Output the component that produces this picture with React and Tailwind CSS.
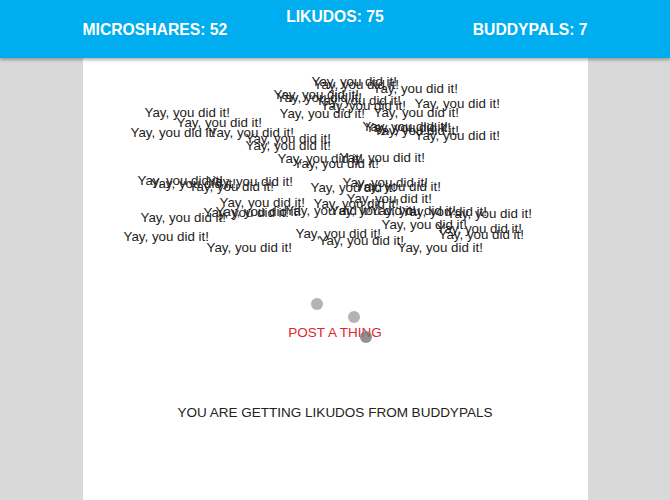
import React from "react";

// [x, y] page coords of each message (left edge, vertical centre)
const yays = [
  [311, 82], [313, 85], [372, 89], [273, 95], [276, 98], [315, 101],
  [414, 104], [320, 106], [144, 113], [279, 114], [373, 113], [176, 123],
  [362, 127], [365, 128], [130, 133], [208, 133], [373, 131], [414, 136],
  [245, 139], [245, 146], [277, 159], [339, 158], [293, 164], [137, 181],
  [150, 184], [207, 182], [342, 183], [188, 187], [310, 188], [355, 187],
  [346, 199], [219, 203], [313, 204], [203, 213], [215, 212], [285, 211],
  [330, 211], [370, 211], [401, 212], [446, 214], [140, 218], [381, 225],
  [436, 229], [295, 234], [438, 235], [123, 237], [318, 241], [206, 248],
  [397, 248],
];

const dots = [
  { left: 228, top: 240, tone: "bg-[#b3b3b3]" },
  { left: 265, top: 253, tone: "bg-[#b3b3b3]" },
  { left: 277, top: 273, tone: "bg-[#777]/80" },
];

export default function App() {
  return (
    <div className="min-h-screen bg-[#d9d9d9] font-['Liberation_Sans',Arial,sans-serif]">
      {/* Score bar */}
      <header className="relative z-10 h-[58px] bg-[#00adee] text-white shadow-[0_2px_3px_rgba(0,0,0,0.3)]">
        <div className="mx-auto grid w-[505px] grid-cols-3 text-[15.7px] font-bold leading-[18px]">
          <div className="pt-[21px]">MICROSHARES: 52</div>
          <div className="pt-[8px] text-center">LIKUDOS: 75</div>
          <div className="pt-[21px] text-right">BUDDYPALS: 7</div>
        </div>
      </header>

      {/* Feed panel */}
      <main className="relative mx-auto h-[442px] w-[505px] bg-white text-[13.33px] leading-[16px] text-[#222]">
        {yays.map(([x, y], i) => (
          <span
            key={i}
            className="absolute whitespace-nowrap"
            style={{ left: x - 82, top: y - 58 - 8 }}
          >
            Yay, you did it!
          </span>
        ))}

        {dots.map((d, i) => (
          <span
            key={i}
            className={`absolute h-3 w-3 rounded-full ${d.tone}`}
            style={{ left: d.left, top: d.top }}
          />
        ))}

        <div className="flex flex-col items-center pt-[267px]">
          <button className="text-[13.5px] text-[#e0262b]">POST A THING</button>
          <p className="mt-[64px] text-[13.5px]">YOU ARE GETTING LIKUDOS FROM BUDDYPALS</p>
        </div>
      </main>
    </div>
  );
}
